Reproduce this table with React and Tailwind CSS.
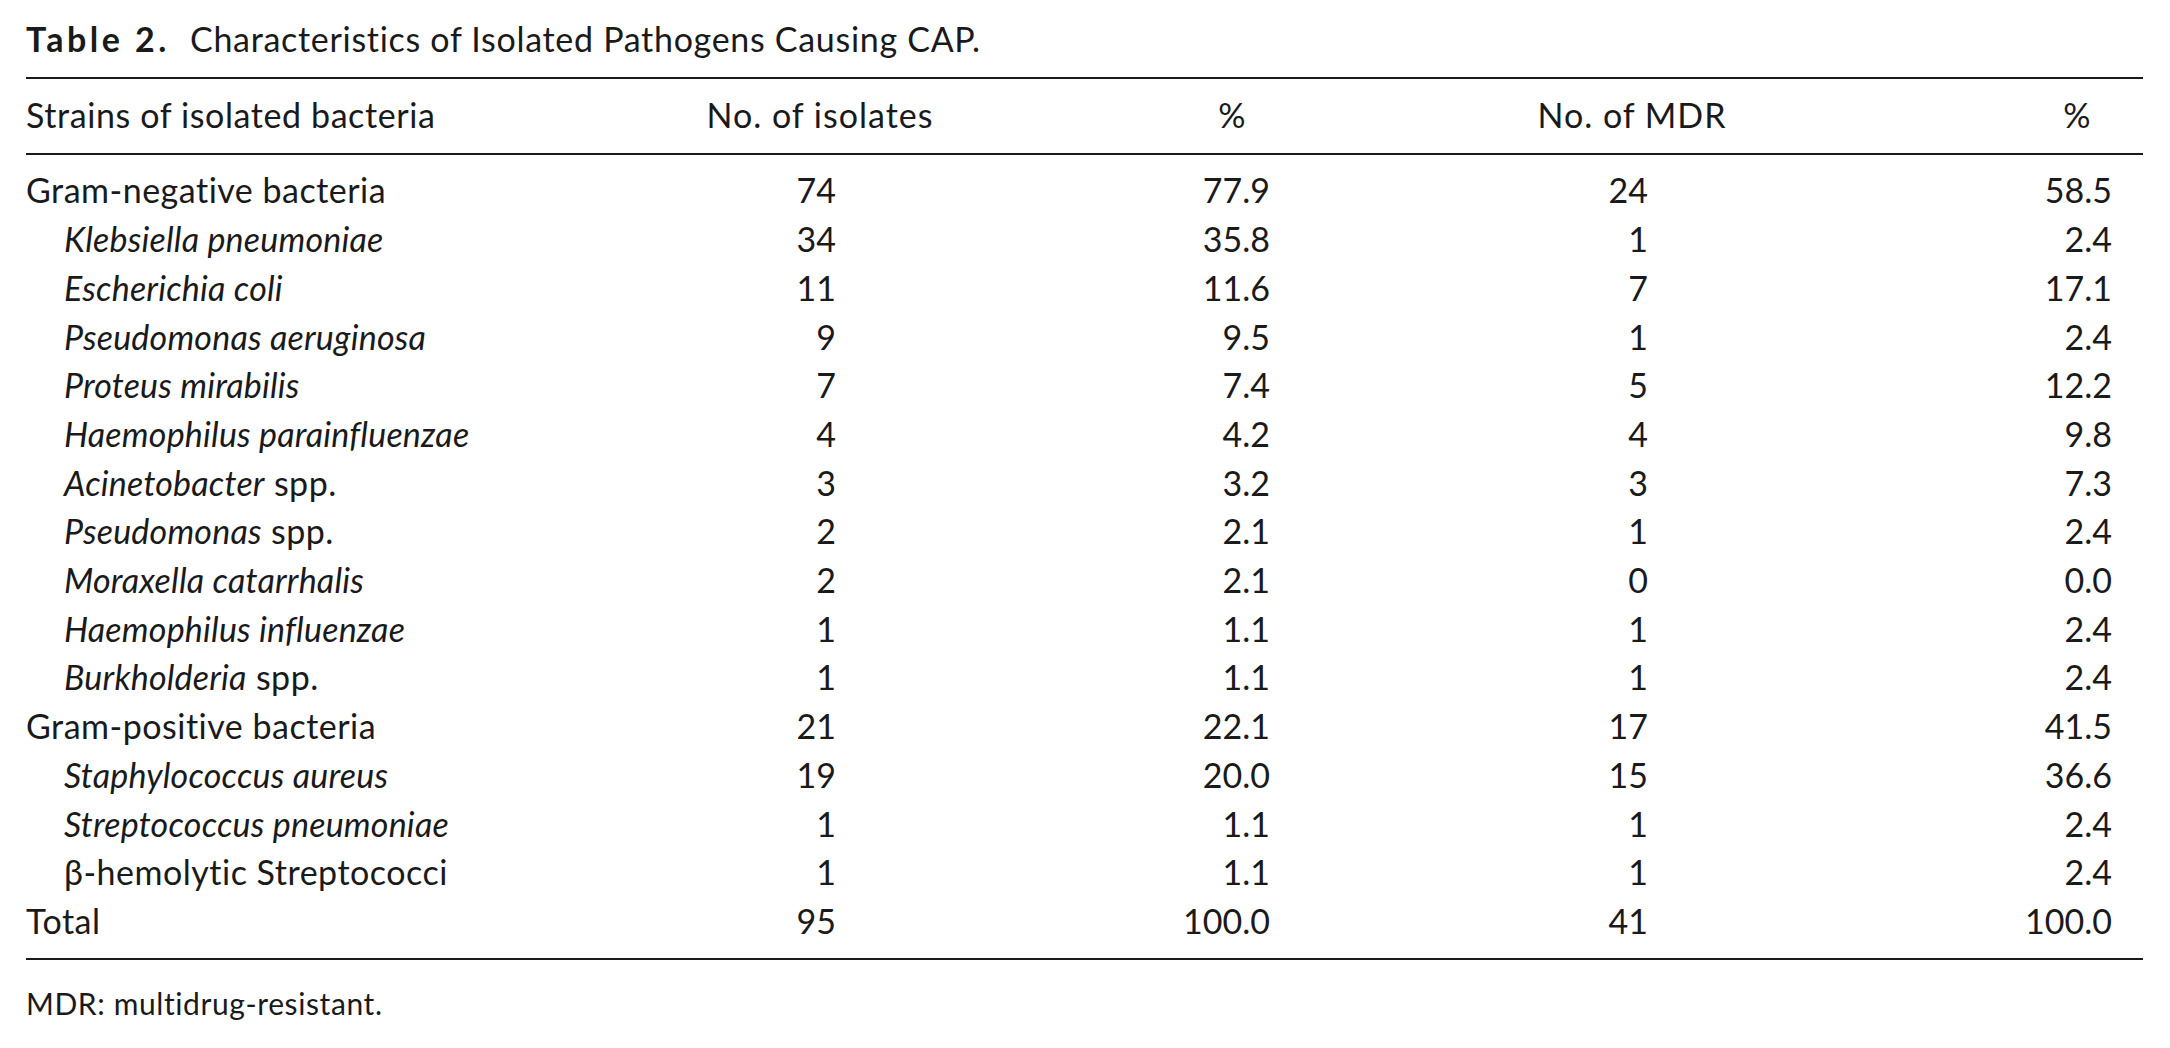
import React from 'react';

const rows = [
  { name: 'Gram-negative bacteria', n: '74', p: '77.9', mdr: '24', mp: '58.5' },
  { name: 'Klebsiella pneumoniae', italic: true, n: '34', p: '35.8', mdr: '1', mp: '2.4' },
  { name: 'Escherichia coli', italic: true, n: '11', p: '11.6', mdr: '7', mp: '17.1' },
  { name: 'Pseudomonas aeruginosa', italic: true, n: '9', p: '9.5', mdr: '1', mp: '2.4' },
  { name: 'Proteus mirabilis', italic: true, n: '7', p: '7.4', mdr: '5', mp: '12.2' },
  { name: 'Haemophilus parainfluenzae', italic: true, n: '4', p: '4.2', mdr: '4', mp: '9.8' },
  { name: 'Acinetobacter', italic: true, spp: true, n: '3', p: '3.2', mdr: '3', mp: '7.3' },
  { name: 'Pseudomonas', italic: true, spp: true, n: '2', p: '2.1', mdr: '1', mp: '2.4' },
  { name: 'Moraxella catarrhalis', italic: true, n: '2', p: '2.1', mdr: '0', mp: '0.0' },
  { name: 'Haemophilus influenzae', italic: true, n: '1', p: '1.1', mdr: '1', mp: '2.4' },
  { name: 'Burkholderia', italic: true, spp: true, n: '1', p: '1.1', mdr: '1', mp: '2.4' },
  { name: 'Gram-positive bacteria', n: '21', p: '22.1', mdr: '17', mp: '41.5' },
  { name: 'Staphylococcus aureus', italic: true, n: '19', p: '20.0', mdr: '15', mp: '36.6' },
  { name: 'Streptococcus pneumoniae', italic: true, n: '1', p: '1.1', mdr: '1', mp: '2.4' },
  { name: 'β-hemolytic Streptococci', sub: true, n: '1', p: '1.1', mdr: '1', mp: '2.4' },
  { name: 'Total', n: '95', p: '100.0', mdr: '41', mp: '100.0' },
];

const grid = 'grid grid-cols-[674px_240px_584px_216px_403px]';

// first column label, species names indented + italic
const Label = ({ row }) => {
  const indent = row.italic || row.sub;
  return (
    <div className={indent ? 'pl-[38px] whitespace-nowrap' : 'whitespace-nowrap'}>
      {row.italic ? (
        <span className="italic tracking-[0.2px]">{row.name}</span>
      ) : (
        <span className="tracking-[0.5px]">{row.name}</span>
      )}
      {row.spp && <span className="tracking-[0.5px]"> spp.</span>}
    </div>
  );
};

const App = () => {
  return (
    <div className="w-[2170px] h-[1048px] bg-white text-[#1a1a1a] font-['Lato','Liberation_Sans',sans-serif] overflow-hidden">
      <div className="ml-[26px] w-[2117px] pt-[15px]">
        <div className="flex text-[34px] leading-[48.7px] whitespace-nowrap">
          <span className="font-bold w-[164px] tracking-[3.5px]">Table 2.</span>
          <span className="tracking-[0.7px]">Characteristics of Isolated Pathogens Causing CAP.</span>
        </div>

        <div className="mt-[13px] h-[2px] bg-[#1a1a1a]" />

        <div className={`${grid} text-[34px] leading-[48.7px] pt-[12px] pb-[14px]`}>
          <div className="whitespace-nowrap tracking-[0.6px]">Strains of isolated bacteria</div>
          <div className="text-center whitespace-nowrap tracking-[1px]">No. of isolates</div>
          <div className="text-center">%</div>
          <div className="text-center whitespace-nowrap tracking-[1px]">No. of MDR</div>
          <div className="text-center pl-[271px]">%</div>
        </div>

        <div className="h-[2px] bg-[#1a1a1a]" />

        <div className="pt-[11px] pb-[12px] text-[34px] leading-[48.7px]">
          {rows.map((row) => (
            <div key={row.name} className={grid}>
              <Label row={row} />
              <div className="text-right pr-[104px]">{row.n}</div>
              <div className="text-right pr-[254px]">{row.p}</div>
              <div className="text-right pr-[92px]">{row.mdr}</div>
              <div className="text-right pr-[31px]">{row.mp}</div>
            </div>
          ))}
        </div>

        <div className="h-[2px] bg-[#1a1a1a]" />

        <div className="mt-[23px] text-[30px] leading-[40px] tracking-[0.6px]">MDR: multidrug-resistant.</div>
      </div>
    </div>
  );
};

export default App;
